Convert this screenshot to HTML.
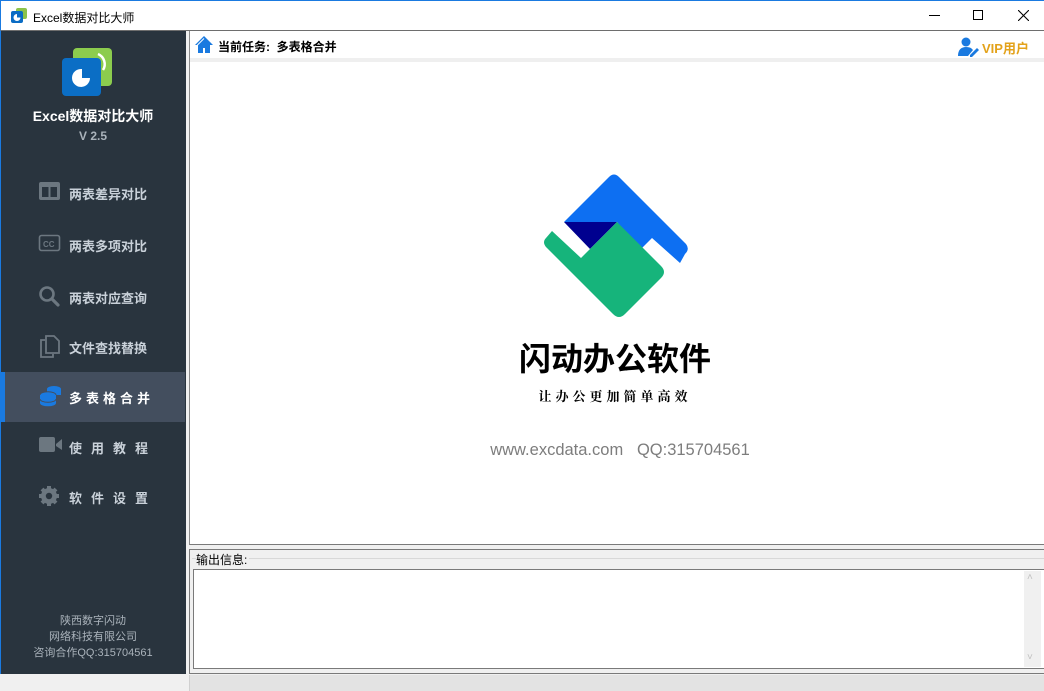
<!DOCTYPE html>
<html><head><meta charset="utf-8"><style>
*{margin:0;padding:0;box-sizing:border-box}
body{width:1044px;height:691px;overflow:hidden;background:#f0f0f0;font-family:"Liberation Sans","Microsoft YaHei","Noto Sans CJK SC",sans-serif;position:relative}
.abs{position:absolute}
#title{left:0;top:0;width:1044px;height:31px;background:#fff;border-top:1px solid #1a7ae0;border-left:1px solid #1a7ae0;border-bottom:1px solid #6e6e6e}
#side{left:0;top:31px;width:186px;height:643px;background:#29343e;border-left:1px solid #1a7ae0}
.nav{position:absolute;left:0;width:184px;height:50px;color:#c9d1d9;font-size:13px;font-weight:bold}
.nav span{position:absolute;left:68px;top:16px}
.nav svg{position:absolute;left:37px;top:13px}
.cn{font-family:"Liberation Sans","Noto Sans CJK SC",sans-serif}
</style></head><body>
<div id="title" class="abs">
 <svg class="abs" style="left:10px;top:7px" width="16" height="16"><rect x="5" y="0" width="11" height="11" rx="2" fill="#8bc34a"/><rect x="0" y="3" width="12" height="12" rx="2" fill="#0a6cc4"/><path d="M6 6 A3.5 3.5 0 1 0 9.5 9.5 L6 9.5Z" fill="#fff"/></svg>
 <div class="abs cn" style="left:32px;top:8px;font-size:12px;color:#000">Excel数据对比大师</div>
 <div class="abs" style="left:928px;top:14px;width:11px;height:1px;background:#000"></div>
 <div class="abs" style="left:972px;top:9px;width:10px;height:10px;border:1px solid #000"></div>
 <svg class="abs" style="left:1017px;top:9px" width="11" height="11"><path d="M0 0L11 11M11 0L0 11" stroke="#000" stroke-width="1.1"/></svg>
</div>
<div id="side" class="abs">
 <svg class="abs" style="left:61px;top:17px" width="52" height="50"><rect x="11" y="0" width="39" height="38" rx="4" fill="#8ccc4e"/><path d="M36 6 A11 11 0 0 1 41 22" stroke="#fff" stroke-width="2.5" fill="none"/><rect x="0" y="10" width="39" height="38" rx="4" fill="#0b6ec5"/><path d="M20 21 A9 9 0 1 0 28 30 L20 30Z" fill="#fff"/></svg>
 <div class="abs cn" style="left:0;width:184px;top:75px;text-align:center;color:#fff;font-weight:bold;font-size:14px">Excel数据对比大师</div>
 <div class="abs" style="left:0;width:184px;top:98px;text-align:center;color:#aab3bb;font-weight:bold;font-size:12px">V 2.5</div>
 <div class="nav cn" style="top:137px"><svg width="23" height="20"><rect x="1" y="1" width="21" height="18" rx="2" fill="#6c7780"/><rect x="4" y="6" width="6.5" height="10" fill="#29343e"/><rect x="12.5" y="6" width="6.5" height="10" fill="#29343e"/></svg><span>两表差异对比</span></div>
 <div class="nav cn" style="top:189px"><svg width="23" height="20"><rect x="1.5" y="2.5" width="20" height="15" rx="2" fill="none" stroke="#6c7780" stroke-width="1.6"/><text x="5" y="14" font-size="8" font-weight="bold" fill="#6c7780" font-family="Liberation Sans">CC</text></svg><span>两表多项对比</span></div>
 <div class="nav cn" style="top:241px"><svg width="23" height="22"><circle cx="9" cy="9" r="6.5" fill="none" stroke="#6c7780" stroke-width="2.6"/><path d="M14 14L20 20" stroke="#6c7780" stroke-width="3.2" stroke-linecap="round"/></svg><span>两表对应查询</span></div>
 <div class="nav cn" style="top:291px"><svg width="23" height="24"><path d="M7 5H3v17h12v-3" fill="none" stroke="#6c7780" stroke-width="1.8"/><path d="M8 1h8l5 5v12H8z" fill="none" stroke="#6c7780" stroke-width="1.8"/></svg><span>文件查找替换</span></div>
 <div class="nav cn" style="top:341px;background:#434e5e;color:#fff"><div class="abs" style="left:0;top:0;width:4px;height:50px;background:#1a7ae0"></div><svg width="26" height="24" style="top:12px"><ellipse cx="16" cy="5" rx="7" ry="3" fill="#1a7ae0"/><rect x="9" y="5" width="14" height="6" fill="#1a7ae0"/><ellipse cx="10" cy="11" rx="8" ry="3.3" fill="#1a7ae0" stroke="#434e5e" stroke-width="1"/><path d="M2 11v8a8 3.3 0 0 0 16 0v-8" fill="#1a7ae0"/><path d="M2 15a8 3.3 0 0 0 16 0" stroke="#434e5e" fill="none"/></svg><span style="letter-spacing:4px">多表格合并</span></div>
 <div class="nav cn" style="top:391px"><svg width="26" height="20"><rect x="1" y="2" width="16" height="15" rx="2" fill="#6c7780"/><path d="M18 9L24 4V15L18 11Z" fill="#6c7780"/></svg><span style="letter-spacing:9px">使用教程</span></div>
 <div class="nav cn" style="top:441px"><svg width="24" height="24"><g fill="#6c7780"><circle cx="11" cy="11" r="8"/><g stroke="#6c7780" stroke-width="4"><path d="M11 1v20M1 11h20M4 4l14 14M18 4L4 18"/></g></g><circle cx="11" cy="11" r="3.2" fill="#29343e"/></svg><span style="letter-spacing:9px">软件设置</span></div>
 <div class="abs cn" style="left:0;width:184px;top:582px;text-align:center;color:#aab3bb;font-size:11px;line-height:16px">陕西数字闪动<br>网络科技有限公司<br>咨询合作QQ:315704561</div>
</div>
<!-- main -->
<div class="abs" style="left:189px;top:31px;width:855px;height:514px;background:#fff;border-left:1px solid #8a8a8a;border-bottom:1px solid #7a7a7a"></div>
<div class="abs" style="left:190px;top:58px;width:854px;height:4px;background:#efefef"></div>
<svg class="abs" style="left:194px;top:35px" width="20" height="19"><path d="M10 1L1 10h3v8h5v-5h2v5h5v-8h3z" fill="#1a7ae0"/><path d="M10 3.5L3 10.5" stroke="#fff" stroke-width="1"/></svg>
<div class="abs cn" style="left:218px;top:38px;font-size:12px;font-weight:bold;color:#000">当前任务:&nbsp; 多表格合并</div>
<svg class="abs" style="left:957px;top:37px" width="22" height="20"><circle cx="9" cy="5" r="4.5" fill="#1a7ae0"/><path d="M1 19c0-6 3-9 8-9s6 2 7 3l-5 6z" fill="#1a7ae0"/><path d="M13 18l7-7 2 2-7 7h-2z" fill="#1a7ae0"/></svg>
<div class="abs cn" style="left:982px;top:38px;font-size:13px;font-weight:bold;color:#e3a21a">VIP用户</div>
<svg class="abs" style="left:540px;top:170px" width="160" height="160" viewBox="540 170 160 160">
 <path d="M564 222L609 177Q614 172 619 177L686 244Q690 249 685 254L680 263L652 238L640 250L617 222Z" fill="#0d6ff2"/>
 <path d="M564 222L617 222L590 249Z" fill="#00008f"/>
 <path d="M617 222L661 266Q667 272 661 278L625 314Q619 320 613 314L546 247Q542 242 546 238L552 231L581 258Z" fill="#16b47b"/>
</svg>
<div class="abs cn" style="left:480px;width:270px;top:334px;text-align:center;font-size:32px;font-weight:bold;color:#000">闪动办公软件</div>
<div class="abs" style="left:490px;width:250px;top:386px;text-align:center;font-size:13px;font-weight:bold;letter-spacing:4px;color:#000;font-family:'Liberation Serif','Noto Serif CJK SC',serif">让办公更加简单高效</div>
<div class="abs" style="left:470px;width:300px;top:441px;text-align:center;font-size:16.5px;color:#7d7d7d">www.excdata.com&nbsp;&nbsp; QQ:315704561</div>
<!-- output -->
<div class="abs" style="left:189px;top:549px;width:855px;height:125px;border-top:1px solid #7a7a7a;border-left:1px solid #7a7a7a;border-bottom:1px solid #7a7a7a"></div>
<div class="abs" style="left:192px;top:558px;width:852px;height:1px;background:#d8d8d8"></div>
<div class="abs cn" style="left:196px;top:551px;font-size:12px;color:#000;background:#f0f0f0;padding-right:2px">输出信息:</div>
<div class="abs" style="left:193px;top:569px;width:851px;height:100px;background:#fff;border:1px solid #7a7a7a;border-right:none"></div>
<div class="abs" style="left:1024px;top:571px;width:17px;height:96px;background:#f0f0f0"></div>
<div class="abs" style="left:1027px;top:572px;font-size:10px;color:#c0c0c0">˄</div>
<div class="abs" style="left:1027px;top:652px;font-size:10px;color:#c0c0c0">˅</div>
<div class="abs" style="left:189px;top:675px;width:855px;height:16px;background:#e3e3e3;border-left:1px solid #d0d0d0"></div>
</body></html>
